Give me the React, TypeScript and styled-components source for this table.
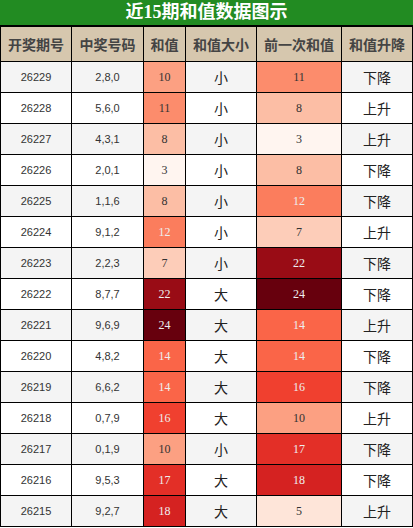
import React from "react";
import styled, { createGlobalStyle } from "styled-components";

const GlobalStyle = createGlobalStyle`
  html, body {
    margin: 0;
    padding: 0;
    background: #fff;
  }
`;

const COLS = "71px 72px 42px 71px 85px 71px";

const Wrapper = styled.div`
  width: 413px;
  font-family: "Noto Sans CJK SC", "Noto Sans", sans-serif;
`;

const Title = styled.div`
  height: 25px;
  background: #228b22;
  color: #fff;
  font-family: "Liberation Serif", "Noto Sans CJK SC", serif;
  font-weight: 700;
  font-size: 18px;
  line-height: 25px;
  text-align: center;
  border-bottom: 2px solid #000;
`;

const Table = styled.div`
  border-left: 1px solid #000;
`;

const Row = styled.div<{ $bg: string; $h: number }>`
  display: grid;
  grid-template-columns: ${COLS};
  height: ${(p) => p.$h}px;
  background: ${(p) => p.$bg};
`;

const CellBase = styled.div`
  display: flex;
  align-items: center;
  justify-content: center;
  border-right: 1px solid #000;
  border-bottom: 1px solid #000;
`;

const HeadCell = styled(CellBase)`
  color: #444;
  font-size: 14px;
  font-weight: 700;
`;

const Cell = styled(CellBase)<{ $kind?: "num" | "cjk" }>`
  font-size: ${(p) => (p.$kind === "cjk" ? "14px" : "11px")};
  color: ${(p) => (p.$kind === "cjk" ? "#222" : "#333")};
  font-family: ${(p) =>
    p.$kind === "cjk"
      ? `"Noto Sans CJK SC", sans-serif`
      : `"Liberation Sans", "Noto Sans", sans-serif`};
`;

const HeatCell = styled(CellBase)<{ $bg: string; $dark: boolean }>`
  background: ${(p) => p.$bg};
  color: ${(p) => (p.$dark ? "#eee" : "#333")};
  font-family: "Liberation Serif", serif;
  font-size: 12px;
`;

const heat: Record<number, string> = {
  3: "#fff5f0",
  5: "#fee5d9",
  7: "#fdcdb9",
  8: "#fcbea5",
  10: "#fca082",
  11: "#fc8c6c",
  12: "#fb7d5d",
  14: "#fa6548",
  16: "#f0402f",
  17: "#e32f27",
  18: "#d52221",
  22: "#990c15",
  24: "#67000d",
};

const rows = [
  ["26229", "2,8,0", 10, "小", 11, "下降"],
  ["26228", "5,6,0", 11, "小", 8, "上升"],
  ["26227", "4,3,1", 8, "小", 3, "上升"],
  ["26226", "2,0,1", 3, "小", 8, "下降"],
  ["26225", "1,1,6", 8, "小", 12, "下降"],
  ["26224", "9,1,2", 12, "小", 7, "上升"],
  ["26223", "2,2,3", 7, "小", 22, "下降"],
  ["26222", "8,7,7", 22, "大", 24, "下降"],
  ["26221", "9,6,9", 24, "大", 14, "上升"],
  ["26220", "4,8,2", 14, "大", 14, "下降"],
  ["26219", "6,6,2", 14, "大", 16, "下降"],
  ["26218", "0,7,9", 16, "大", 10, "上升"],
  ["26217", "0,1,9", 10, "小", 17, "下降"],
  ["26216", "9,5,3", 17, "大", 18, "下降"],
  ["26215", "9,2,7", 18, "大", 5, "上升"],
] as const;

const headers = ["开奖期号", "中奖号码", "和值", "和值大小", "前一次和值", "和值升降"];

const Heat: React.FC<{ v: number }> = ({ v }) => (
  <HeatCell $bg={heat[v]} $dark={v >= 12}>
    {v}
  </HeatCell>
);

export default function App() {
  return (
    <Wrapper>
      <GlobalStyle />
      <Title>近15期和值数据图示</Title>
      <Table>
        <Row $bg="#d6c7ae" $h={35}>
          {headers.map((h) => (
            <HeadCell key={h}>{h}</HeadCell>
          ))}
        </Row>
        {rows.map((r, i) => (
          <Row key={r[0]} $bg={i % 2 === 0 ? "#f4f4f4" : "#fff"} $h={31}>
            <Cell $kind="num">{r[0]}</Cell>
            <Cell $kind="num">{r[1]}</Cell>
            <Heat v={r[2]} />
            <Cell $kind="cjk">{r[3]}</Cell>
            <Heat v={r[4]} />
            <Cell $kind="cjk">{r[5]}</Cell>
          </Row>
        ))}
      </Table>
    </Wrapper>
  );
}
